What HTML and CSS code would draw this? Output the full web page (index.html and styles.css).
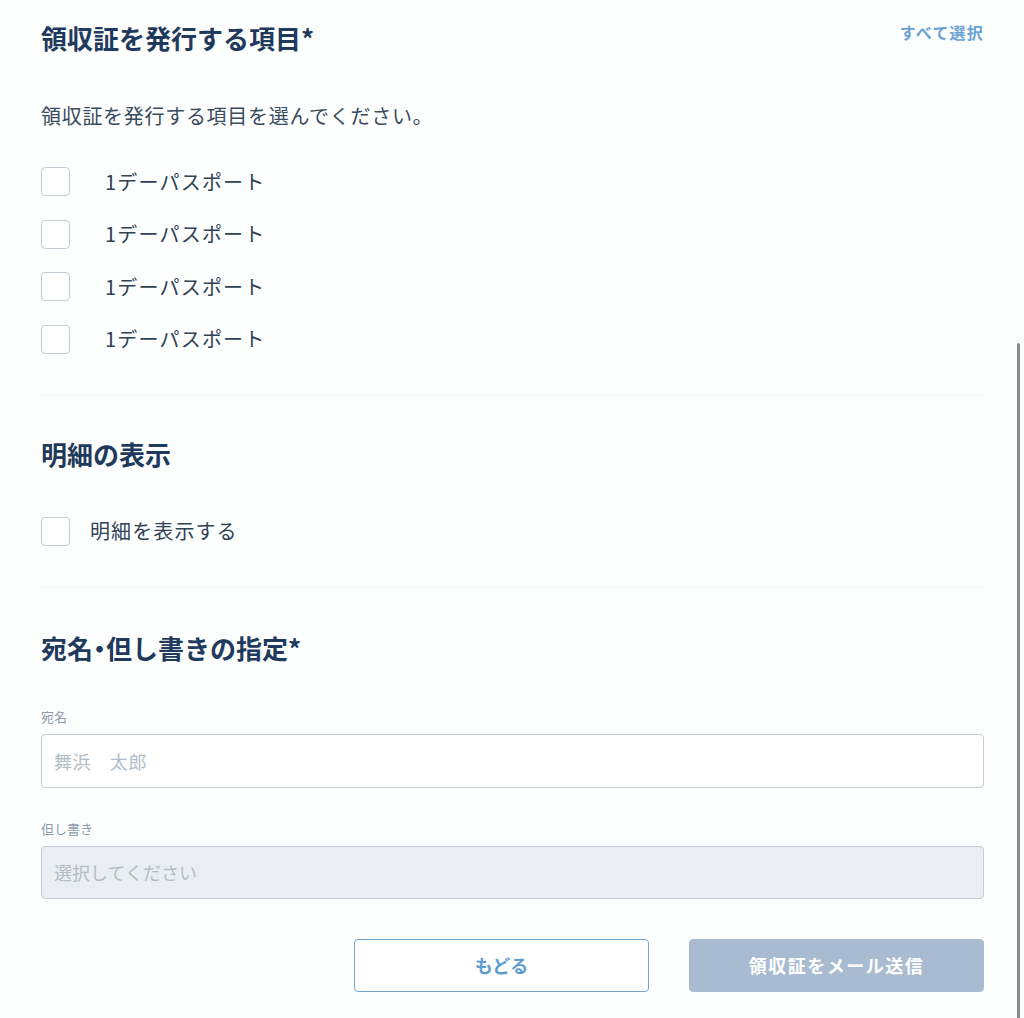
FILE: index.html
```html
<!DOCTYPE html>
<html lang="ja">
<head>
<meta charset="utf-8">
<title>領収証</title>
<link rel="stylesheet" href="styles.css">
</head>
<body>
<div class="page">
  <section class="section first">
    <div class="section-head">
      <h2 class="title">領収証を発行する項目*</h2>
      <a class="select-all" href="#">すべて選択</a>
    </div>
    <p class="desc">領収証を発行する項目を選んでください。</p>
    <ul class="check-list">
      <li class="check-row"><span class="box"></span><span class="check-label wide">1デーパスポート</span></li>
      <li class="check-row"><span class="box"></span><span class="check-label wide">1デーパスポート</span></li>
      <li class="check-row"><span class="box"></span><span class="check-label wide">1デーパスポート</span></li>
      <li class="check-row"><span class="box"></span><span class="check-label wide">1デーパスポート</span></li>
    </ul>
  </section>
  <hr class="divider">
  <section class="section">
    <h2 class="title">明細の表示</h2>
    <div class="check-row single"><span class="box"></span><span class="check-label">明細を表示する</span></div>
  </section>
  <hr class="divider">
  <section class="section last">
    <h2 class="title">宛名<span class="dot">・</span>但し書きの指定*</h2>
    <label class="field-label first-label">宛名</label>
    <div class="field">舞浜　太郎</div>
    <label class="field-label">但し書き</label>
    <div class="field select">選択してください</div>
    <div class="actions">
      <button class="btn btn-back">もどる</button>
      <button class="btn btn-send">領収証をメール送信</button>
    </div>
  </section>
</div>
<div class="scroll-indicator"></div>
</body>
</html>
```
FILE: styles.css
```css
html, body {
  margin: 0;
  padding: 0;
  background: #fdfefe;
}
body {
  font-family: "Noto Sans CJK JP", "Noto Sans", sans-serif;
  color: #2f4256;
  width: 1024px;
  height: 1018px;
  overflow: hidden;
  position: relative;
}
.page {
  width: 943px;
  padding: 20px 0 0 41px;
}
.section-head {
  display: flex;
  justify-content: space-between;
  align-items: flex-start;
}
.title {
  margin: 0;
  font-size: 26px;
  line-height: 36px;
  font-weight: 700;
  color: #1f3a5c;
}
.title .dot {
  font-feature-settings: "halt" 1;
}
.select-all {
  font-size: 16px;
  line-height: 20px;
  margin-top: 2px;
  font-weight: 700;
  color: #6aa2d2;
  text-decoration: none;
  letter-spacing: 1.2px;
}
.desc {
  margin: 46px 0 0;
  font-size: 20px;
  line-height: 28px;
  letter-spacing: 0.7px;
  color: #3a4b5e;
}
.check-list {
  list-style: none;
  margin: 37px 0 0;
  padding: 0;
  display: flex;
  flex-direction: column;
  gap: 23.5px;
}
.check-row {
  display: flex;
  align-items: center;
  height: 29px;
}
.box {
  width: 27px;
  height: 27px;
  border: 1px solid #c3cbd4;
  border-radius: 4px;
  background: #fff;
  flex: none;
}
.check-label {
  margin-left: 20px;
  font-size: 20px;
  line-height: 28px;
  letter-spacing: 1.1px;
  color: #2f4256;
}
.check-label.wide {
  margin-left: 35px;
  letter-spacing: 1.2px;
}
.divider {
  border: 0;
  border-top: 1px solid #eceef0;
  margin: 41px 0 0;
  height: 0;
}
.section {
  margin-top: 40px;
}
.section.first {
  margin-top: 0;
}
.section.last {
  margin-top: 42px;
}
.single {
  margin-top: 45px;
}
.field-label {
  display: block;
  font-size: 13px;
  line-height: 18px;
  color: #8d9bab;
  margin-top: 32px;
  margin-bottom: 8px;
}
.field-label.first-label {
  margin-top: 42px;
}
.field {
  box-sizing: border-box;
  height: 54px;
  border: 1px solid #c3cbd4;
  border-radius: 4px;
  background: #fff;
  padding: 0 12px;
  display: flex;
  align-items: center;
  font-size: 18px;
  letter-spacing: 0.6px;
  color: #b3bdc8;
}
.field.select {
  height: 53px;
  background: #eaeef2;
  letter-spacing: 0;
}
.actions {
  display: flex;
  justify-content: flex-end;
  gap: 40px;
  margin-top: 40px;
}
.btn {
  box-sizing: border-box;
  width: 295px;
  height: 53px;
  border-radius: 4px;
  font-family: inherit;
  font-size: 18px;
  font-weight: 700;
  cursor: pointer;
}
.btn-back {
  background: #fff;
  border: 1px solid #6fa6d2;
  color: #5e9cd0;
}
.btn-send {
  background: #a8bbd0;
  border: 1px solid #a8bbd0;
  color: #fff;
  letter-spacing: 1.5px;
}
.scroll-indicator {
  position: absolute;
  left: 1017px;
  top: 343px;
  width: 3px;
  height: 675px;
  background: #8a8a8a;
  border-radius: 2px 2px 0 0;
}
```
